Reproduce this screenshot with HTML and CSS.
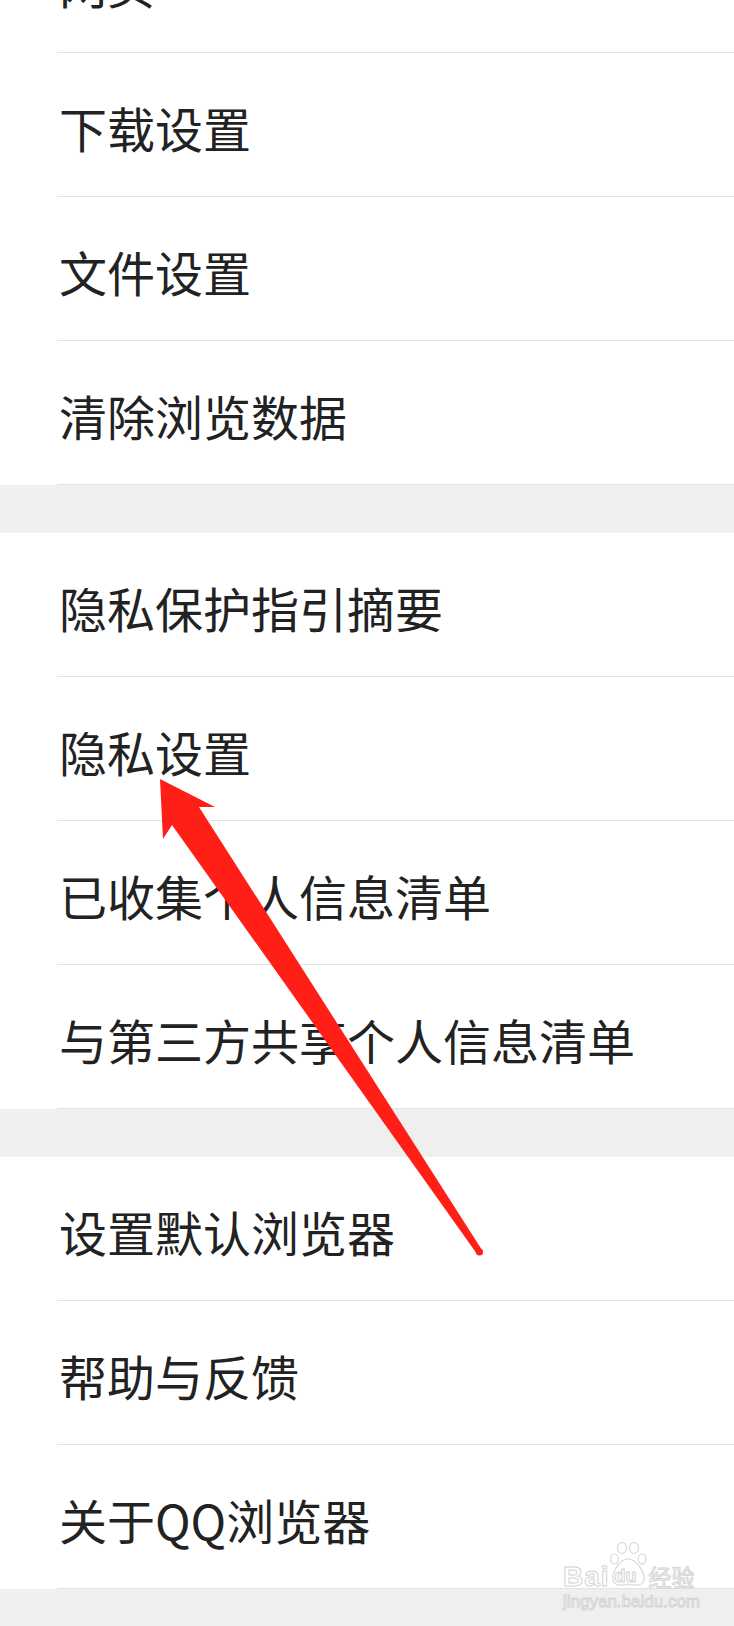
FILE: index.html
```
<!doctype html>
<html>
<head>
  <meta charset="utf8">
  <title>设置</title>
  <link rel="stylesheet" href="styles.css">
</head>
<body>
  <div class="page">
    <div class="group first">
      <div class="row">网页</div>
      <div class="row">下载设置</div>
      <div class="row">文件设置</div>
      <div class="row">清除浏览数据</div>
    </div>
    <div class="group">
      <div class="row">隐私保护指引摘要</div>
      <div class="row">隐私设置</div>
      <div class="row">已收集个人信息清单</div>
      <div class="row">与第三方共享个人信息清单</div>
    </div>
    <div class="group">
      <div class="row">设置默认浏览器</div>
      <div class="row">帮助与反馈</div>
      <div class="row">关于QQ浏览器</div>
    </div>

    <!-- annotation arrow drawn over the list -->
    <svg class="arrow" width="734" height="1626" viewBox="0 0 734 1626">
      <polygon fill="#ff1f17" points="160,779 215,807 199,807 482,1250 477,1254 172,825 163,839"/>
      <circle cx="479.5" cy="1252" r="3.6" fill="#ff1f17"/>
    </svg>

    <div class="watermark">
      <div class="wm-top">
        <span class="wm-bai">Bai</span>
        <span class="wm-paw">
          <svg width="38" height="46" viewBox="0 0 38 46">
            <g fill="none" stroke="#d8d8d8" stroke-width="1.2">
              <ellipse cx="12" cy="6" rx="4.5" ry="5.5"/>
              <ellipse cx="24" cy="6" rx="4.5" ry="5.5"/>
              <ellipse cx="4.5" cy="17" rx="3.8" ry="5"/>
              <ellipse cx="32" cy="17" rx="3.8" ry="5"/>
              <path d="M18 17 C9 17 2 31 3 38 C4 44 12 44 18 42 C24 44 33 44 34 38 C35 31 27 17 18 17 Z"/>
            </g>
          </svg>
          <span class="wm-du">du</span>
        </span>
        <span class="wm-jy">经验</span>
      </div>
      <div class="wm-url">jingyan.baidu.com</div>
    </div>
  </div>
</body>
</html>
```
FILE: styles.css
```
html, body {
  margin: 0;
  padding: 0;
  background: #efefef;
  font-family: "Noto Sans CJK SC", "Noto Sans", sans-serif;
}
.page {
  position: relative;
  width: 734px;
  height: 1626px;
  overflow: hidden;
}
.group {
  background: #fff;
  margin-bottom: 48px;
}
.group.first {
  margin-top: -91px;
}
.row {
  height: 144px;
  display: flex;
  align-items: center;
  padding-left: 59px;
  padding-top: 4px;
  box-sizing: border-box;
  font-size: 48px;
  color: #222;
  position: relative;
}
.row::after {
  content: "";
  position: absolute;
  left: 57px;
  right: 0;
  bottom: 0;
  height: 1px;
  background: #e2e2e2;
}
.arrow {
  position: absolute;
  left: 0;
  top: 0;
}
.watermark {
  position: absolute;
  left: 563px;
  top: 1542px;
  width: 134px;
}
.wm-top {
  display: flex;
  align-items: flex-end;
  height: 46px;
}
.wm-bai,
.wm-du,
.wm-jy,
.wm-url {
  color: rgba(255, 255, 255, 0.6);
  -webkit-text-stroke: 1px #d4d4d4;
  font-family: "Liberation Sans", sans-serif;
}
.wm-bai {
  font-size: 28px;
  font-weight: bold;
  line-height: 22px;
  letter-spacing: 1px;
}
.wm-paw {
  position: relative;
  width: 38px;
  height: 46px;
}
.wm-paw svg {
  position: absolute;
  left: 0;
  top: 0;
}
.wm-du {
  position: absolute;
  left: 5px;
  bottom: 3px;
  font-size: 18px;
  font-weight: bold;
  line-height: 18px;
}
.wm-jy {
  font-family: "Noto Sans CJK SC", sans-serif;
  font-size: 23px;
  line-height: 23px;
  margin-left: 1px;
}
.wm-url {
  font-size: 17px;
  line-height: 18px;
  margin-top: 5px;
}
```
